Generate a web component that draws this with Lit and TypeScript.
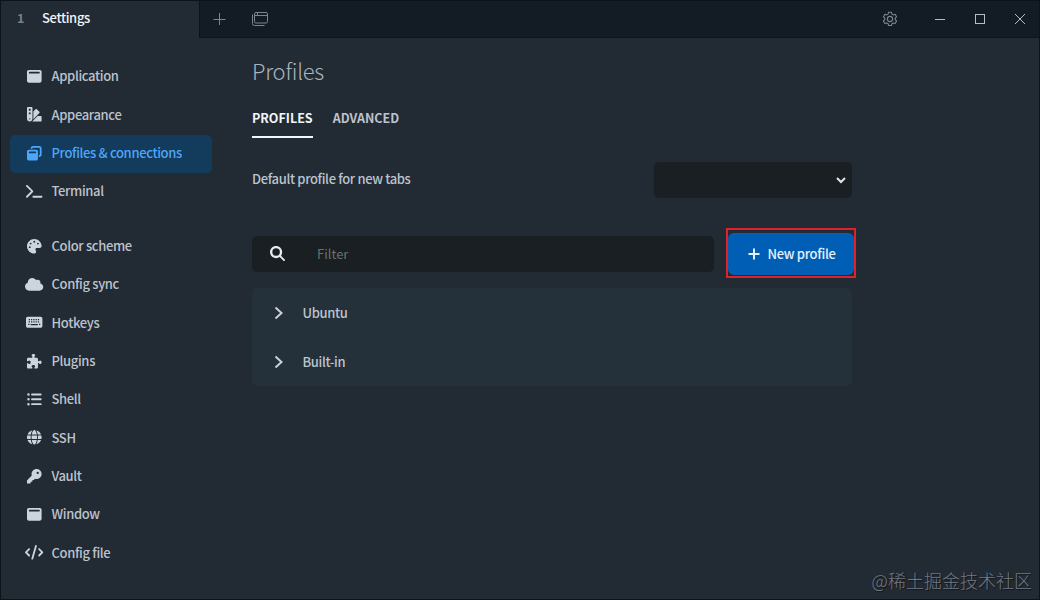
import { LitElement, html, css, svg } from "lit";
import { customElement, property } from "lit/decorators.js";

type Glyph = { w: number; d: string };

const keyHoles = [96, 176, 256, 336, 416]
  .map((x) => `M${x} 136h44v44h-44zM${x} 222h44v44h-44z`)
  .join("");

const ICONS: Record<string, Glyph> = {
  window: { w: 512, d: "M64 32C28.7 32 0 60.7 0 96V416c0 35.3 28.7 64 64 64H448c35.3 0 64-28.7 64-64V96c0-35.3-28.7-64-64-64H64zM96 96H416c17.7 0 32 14.3 32 32s-14.3 32-32 32H96c-17.7 0-32-14.3-32-32s14.3-32 32-32z" },
  restore: { w: 512, d: "M432 64H208c-8.8 0-16 7.2-16 16V96H128V80c0-44.2 35.8-80 80-80H432c44.2 0 80 35.8 80 80V304c0 44.2-35.8 80-80 80H416V320h16c8.8 0 16-7.2 16-16V80c0-8.8-7.2-16-16-16zM0 192c0-35.3 28.7-64 64-64H320c35.3 0 64 28.7 64 64V448c0 35.3-28.7 64-64 64H64c-35.3 0-64-28.7-64-64V192zm64 32c0 17.7 14.3 32 32 32H288c17.7 0 32-14.3 32-32s-14.3-32-32-32H96c-17.7 0-32 14.3-32 32z" },
  swatch: { w: 512, d: "M0 32C0 14.3 14.3 0 32 0H160c17.7 0 32 14.3 32 32V416c0 53-43 96-96 96s-96-43-96-96V32zM223.6 425.9c.3-3.3 .4-6.6 .4-9.9V154l75.4-75.4c12.5-12.5 32.8-12.5 45.3 0l90.5 90.5c12.5 12.5 12.5 32.8 0 45.3L223.6 425.9zM182.8 512l192-192H480c17.7 0 32 14.3 32 32V480c0 17.7-14.3 32-32 32H182.8zM128 64H64v64h64V64zM64 192v64h64V192H64zM96 440a24 24 0 1 0 0-48 24 24 0 1 0 0 48z" },
  terminal: { w: 576, d: "M9.4 86.6C-3.1 74.1-3.1 53.9 9.4 41.4s32.8-12.5 45.3 0l192 192c12.5 12.5 12.5 32.8 0 45.3l-192 192c-12.5 12.5-32.8 12.5-45.3 0s-12.5-32.8 0-45.3L178.7 256 9.4 86.6zM256 416H544c17.7 0 32 14.3 32 32s-14.3 32-32 32H256c-17.7 0-32-14.3-32-32s14.3-32 32-32z" },
  palette: { w: 512, d: "M512 256c0 .9 0 1.8 0 2.7c-.4 36.5-33.6 61.3-70.1 61.3H344c-26.5 0-48 21.5-48 48c0 3.4 .4 6.7 1 9.9c2.1 10.2 6.5 20 10.8 29.9c6.1 13.8 12.1 27.5 12.1 42c0 31.8-21.6 60.7-53.4 62c-3.5 .1-7 .2-10.6 .2C114.6 512 0 397.4 0 256S114.6 0 256 0S512 114.6 512 256zM128 288a32 32 0 1 0 -64 0 32 32 0 1 0 64 0zm0-96a32 32 0 1 0 0-64 32 32 0 1 0 0 64zM288 96a32 32 0 1 0 -64 0 32 32 0 1 0 64 0zm96 96a32 32 0 1 0 0-64 32 32 0 1 0 0 64z" },
  cloud: { w: 640, d: "M0 336c0 79.5 64.5 144 144 144H512c70.7 0 128-57.3 128-128c0-61.9-44-113.6-102.4-125.4c4.1-10.7 6.4-22.4 6.4-34.6c0-53-43-96-96-96c-19.7 0-38.1 6-53.3 16.2C367 64.2 315.3 32 256 32C167.6 32 96 103.6 96 192c0 2.7 .1 5.4 .2 8.1C40.2 219.8 0 273.2 0 336z" },
  keyboard: { w: 576, d: "M64 64C28.700 64 0 92.700 0 128V384c0 35.300 28.700 64 64 64H512c35.300 0 64-28.700 64-64V128c0-35.300-28.700-64-64-64H64zM160 320H416v44H160zM76 308h44v44H76zM456 308h44v44h-44z" + keyHoles },
  puzzle: { w: 512, d: "M192 104.8c0-9.2-5.8-17.3-13.2-22.8C167.2 73.3 160 61.3 160 48c0-26.5 28.7-48 64-48s64 21.5 64 48c0 13.3-7.2 25.3-18.8 34c-7.4 5.5-13.2 13.6-13.2 22.8c0 12.8 10.4 23.2 23.2 23.2H336c26.5 0 48 21.5 48 48v56.8c0 12.8 10.4 23.2 23.2 23.2c9.2 0 17.3-5.8 22.8-13.2c8.7-11.6 20.7-18.8 34-18.8c26.5 0 48 28.7 48 64s-21.5 64-48 64c-13.3 0-25.3-7.2-34-18.8c-5.5-7.4-13.6-13.2-22.8-13.2c-12.8 0-23.2 10.4-23.2 23.2V464c0 26.5-21.5 48-48 48H279.2c-12.8 0-23.2-10.4-23.2-23.2c0-9.2 5.8-17.3 13.2-22.8c11.6-8.7 18.8-20.7 18.8-34c0-26.5-28.7-48-64-48s-64 21.5-64 48c0 13.3 7.2 25.3 18.8 34c7.4 5.5 13.2 13.6 13.2 22.8c0 12.8-10.4 23.2-23.2 23.2H48c-26.5 0-48-21.5-48-48V343.2C0 330.4 10.4 320 23.2 320c9.2 0 17.3 5.8 22.8 13.2C54.7 344.8 66.7 352 80 352c26.5 0 48-28.7 48-64s-21.5-64-48-64c-13.3 0-25.3 7.2-34 18.8C40.5 250.2 32.4 256 23.2 256C10.4 256 0 245.6 0 232.8V176c0-26.5 21.5-48 48-48H168.8c12.8 0 23.2-10.4 23.2-23.2z" },
  list: { w: 512, d: "M52 42a44 44 0 1 1 0 88 44 44 0 1 1 0-88zM52 212a44 44 0 1 1 0 88 44 44 0 1 1 0-88zM52 382a44 44 0 1 1 0 88 44 44 0 1 1 0-88zM176 52H480a34 34 0 0 1 0 68H176a34 34 0 0 1 0-68zM176 222H480a34 34 0 0 1 0 68H176a34 34 0 0 1 0-68zM176 392H480a34 34 0 0 1 0 68H176a34 34 0 0 1 0-68z" },
  globe: { w: 512, d: "M352 256c0 22.2-1.2 43.6-3.3 64H163.3c-2.2-20.4-3.3-41.8-3.3-64s1.2-43.6 3.3-64H348.7c2.2 20.4 3.3 41.8 3.3 64zm28.8-64H503.9c5.3 20.5 8.1 41.9 8.1 64s-2.8 43.5-8.1 64H380.8c2.1-20.6 3.2-42 3.2-64s-1.1-43.4-3.2-64zm112.6-32H376.7c-10-63.9-29.8-117.4-55.3-151.6c78.3 20.7 142 77.5 171.9 151.6zm-149.1 0H167.7c6.1-36.4 15.5-68.6 27-94.7c10.5-23.6 22.2-40.7 33.5-51.5C239.4 3.2 248.7 0 256 0s16.6 3.2 27.8 13.8c11.3 10.8 23 27.9 33.5 51.5c11.6 26 20.9 58.2 27 94.7zm-209 0H18.6C48.6 85.9 112.2 29.1 190.6 8.4C165.1 42.6 145.3 96.1 135.3 160zM8.1 192H131.2c-2.1 20.6-3.2 42-3.2 64s1.1 43.4 3.2 64H8.1C2.8 299.5 0 278.1 0 256s2.8-43.5 8.1-64zM194.7 446.6c-11.6-26-20.9-58.2-27-94.6H344.3c-6.1 36.4-15.5 68.6-27 94.6c-10.5 23.6-22.2 40.7-33.5 51.5C272.6 508.8 263.3 512 256 512s-16.6-3.2-27.8-13.8c-11.3-10.8-23-27.9-33.5-51.5zM135.3 352c10 63.9 29.8 117.4 55.3 151.6C112.2 482.9 48.6 426.1 18.6 352H135.3zm358.1 0c-30 74.1-93.6 130.9-171.9 151.6c25.5-34.2 45.2-87.7 55.3-151.6H493.4z" },
  key: { w: 512, d: "M336 352c97.2 0 176-78.8 176-176S433.2 0 336 0S160 78.800 160 176c0 18.700 2.900 36.800 8.300 53.700L7 391c-4.500 4.500-7 10.600-7 17v80c0 13.300 10.700 24 24 24h80c13.300 0 24-10.700 24-24V448h40c13.300 0 24-10.700 24-24V384h40c6.400 0 12.500-2.500 17-7l33.300-33.300c16.900 5.400 35 8.300 53.700 8.300zM376 96a40 40 0 1 1 0 80 40 40 0 1 1 0-80z" },
  code: { w: 640, d: "M392.8 1.2c-17-4.9-34.7 5-39.6 22l-128 448c-4.9 17 5 34.7 22 39.6s34.7-5 39.6-22l128-448c4.9-17-5-34.7-22-39.6zm80.6 120.1c-12.5 12.5-12.5 32.8 0 45.3L562.7 256l-89.4 89.4c-12.5 12.5-12.5 32.8 0 45.3s32.8 12.5 45.3 0l112-112c12.5-12.5 12.5-32.8 0-45.3l-112-112c-12.5-12.5-32.8-12.5-45.3 0zm-306.7 0c-12.5-12.5-32.8-12.5-45.3 0l-112 112c-12.5 12.5-12.5 32.8 0 45.3l112 112c12.5 12.5 32.8 12.5 45.3 0s12.5-32.8 0-45.3L77.3 256l89.4-89.4c12.5-12.5 12.5-32.8 0-45.3z" },
  search: { w: 512, d: "M416 208c0 45.9-14.9 88.3-40 122.700L502.600 457.400c12.500 12.500 12.500 32.800 0 45.300s-32.800 12.500-45.300 0L330.700 376c-34.400 25.200-76.800 40-122.700 40C93.100 416 0 322.900 0 208S93.100 0 208 0S416 93.100 416 208zM208 336a128 128 0 1 0 0-256 128 128 0 1 0 0 256z" },
};

const NAV: { icon: string; label: string }[][] = [
  [
    { icon: "window", label: "Application" },
    { icon: "swatch", label: "Appearance" },
    { icon: "restore", label: "Profiles & connections" },
    { icon: "terminal", label: "Terminal" },
  ],
  [
    { icon: "palette", label: "Color scheme" },
    { icon: "cloud", label: "Config sync" },
    { icon: "keyboard", label: "Hotkeys" },
    { icon: "puzzle", label: "Plugins" },
    { icon: "list", label: "Shell" },
    { icon: "globe", label: "SSH" },
    { icon: "key", label: "Vault" },
    { icon: "window", label: "Window" },
    { icon: "code", label: "Config file" },
  ],
];

@customElement("solid-icon")
class SolidIcon extends LitElement {
  @property() name = "window";
  static styles = css`
    :host { display: flex; justify-content: center; align-items: center; height: 1em; }
    svg { display: block; height: 1em; flex: none; overflow: visible; }
    path { fill: currentColor; fill-rule: evenodd; }
  `;
  render() {
    const g = ICONS[this.name];
    return html`<svg viewBox="0 0 ${g.w} 512">${svg`<path d=${g.d}></path>`}</svg>`;
  }
}

@customElement("app-root")
class AppRoot extends LitElement {
  @property() active = "Profiles & connections";

  static styles = css`
    :host {
      display: block;
      width: 1040px;
      height: 600px;
      color: #bcc3cc;
      font: 500 13px/20px "Noto Sans CJK SC", sans-serif;
      letter-spacing: -0.350px;
    }
    * { box-sizing: border-box; }
    .window {
      position: relative;
      display: flex;
      flex-direction: column;
      width: 100%;
      height: 100%;
      border: 1px solid #0b131b;
      background: #222a34;
      overflow: hidden;
      white-space: nowrap;
    }
    .bar { display: flex; height: 37px; flex: none; margin-right: -1px; }
    .tab { width: 198px; display: flex; align-items: center; padding: 0 0 3px 16px; gap: 17px; }
    .num { font: 700 12.500px/20px "Noto Sans CJK SC", sans-serif; color: #77818a; width: 8px; padding-bottom: 1px; }
    .tab-title { color: #f0f4f8; font-weight: 500; }
    .strip {
      flex: 1;
      display: flex;
      align-items: center;
      background: #131c25;
      border-left: 1px solid #0b131b;
      border-bottom: 1px solid #0d151d;
    }
    .strip svg { display: block; fill: none; stroke: #7b858e; }
    .cell { width: 40px; display: flex; justify-content: center; }
    .spacer { flex: 1; }
    .gear-cell { margin-right: 10px; }
    .strip .win { stroke: #b4bdc5; }
    .body { display: flex; flex: 1; min-height: 0; }
    nav { width: 211px; padding: 20px 0 0 9px; flex: none; display: flex; flex-direction: column; gap: 16.600px; }
    .item {
      height: 38.300px;
      display: grid;
      grid-template-columns: 18px 1fr;
      align-items: center;
      column-gap: 8px;
      padding: 0 0 1.600px 15.500px;
      border-radius: 5px;
    }
    .item solid-icon { font-size: 14.600px; color: #ccd4e0; }
    .item.on { background: #133b5c; color: #4ea6f8; }
    .item.on solid-icon { color: #4ea6f8; }
    main { width: 600px; margin-left: 40px; padding-top: 15px; }
    h1 { margin: 0; font-size: 22px; line-height: 34px; font-weight: 300; color: #a9b4bd; letter-spacing: -0.250px; }
    .tabs { display: flex; gap: 20px; margin-top: 12px; letter-spacing: 0; }
    .tabs div { height: 39px; padding-top: 9px; font-weight: 700; font-size: 12.500px; border-bottom: 2px solid transparent; }
    .tabs .sel { color: #f3f6f9; border-color: #f3f6f9; }
    .row { display: flex; justify-content: space-between; align-items: center; margin-top: 24px; height: 36px; }
    .row span { padding-bottom: 2px; }
    .select {
      width: 198px;
      height: 36px;
      background: #191f23;
      border-radius: 5px;
      display: flex;
      justify-content: flex-end;
      align-items: center;
      padding-right: 6px;
    }
    .select svg, .chev { display: block; fill: none; stroke: #e2e6e8; }
    .chev { stroke: #ccd2d8; }
    .actions { display: flex; gap: 12px; margin-top: 30px; align-items: center; height: 50px; margin-right: -4px; }
    .filter {
      width: 462px;
      height: 36px;
      margin-top: 1px;
      background: #191f23;
      border-radius: 5px;
      display: flex;
      align-items: center;
      gap: 32px;
      padding-left: 18px;
      color: #68716f;
      font-weight: 400;
      letter-spacing: 0;
    }
    .filter solid-icon { color: #e8ecee; font-size: 15px; width: 15px; }
    .new-frame { width: 130px; height: 50px; border: 2px solid #e0202b; padding: 3px 0 1px; }
    .new {
      height: 42px;
      background: #005fb4;
      border-top: 1px solid #275c8b;
      border-radius: 6px;
      color: #e4f0fb;
      letter-spacing: -0.300px;
      display: flex;
      align-items: center;
      justify-content: center;
      gap: 7px;
      padding: 0 0 2px 2px;
    }
    .list { margin-top: 10px; background: #24303a; border-radius: 5px; height: 98px; }
    .entry { height: 49px; display: flex; align-items: center; gap: 18.500px; padding: 1px 0 0 22px; }
    .mark {
      position: absolute;
      right: 7px;
      bottom: 6px;
      font: 300 18px/26px "Noto Sans CJK SC", sans-serif;
      letter-spacing: 0;
      color: #727981;
      text-shadow: 1px 1px 1px #10161c;
    }
  `;

  private item(i: { icon: string; label: string }) {
    return html`<div class="item ${i.label === this.active ? "on" : ""}">
      <solid-icon name=${i.icon}></solid-icon><span>${i.label}</span>
    </div>`;
  }

  private entry(label: string) {
    return html`<div class="entry">
      <svg class="chev" width="10" height="14" viewBox="0 0 10 14" stroke-width="2">
        <path d="M1.500 1.500 7.500 7 1.500 12.500"></path>
      </svg>
      <span>${label}</span>
    </div>`;
  }

  render() {
    return html`<div class="window">
      <div class="bar">
        <div class="tab"><span class="num">1</span><span class="tab-title">Settings</span></div>
        <div class="strip">
          <div class="cell">
            <svg width="14" height="14" viewBox="0 0 14 14"><path d="M6.500 1v12M.5 7.500h12"></path></svg>
          </div>
          <div class="cell">
            <svg width="18" height="16" viewBox="0 0 18 16">
              <rect x="3.500" y="1.500" width="13" height="10.500" rx="1.500"></rect>
              <path d="M3.500 4.500h13M6.500 1.500v3M1.500 3.500v9q0 2 2 2h10"></path>
            </svg>
          </div>
          <div class="spacer"></div>
          <div class="cell gear-cell">
            <svg width="16" height="16" viewBox="0 0 16 16" stroke-width="1.100">
              <circle cx="8" cy="8" r="2.600"></circle>
              <path d="M6.600.6h2.800l.5 1.900 1.300.8 1.900-.6 1.500 2.400-1.400 1.400v1.500l1.400 1.400-1.500 2.500-1.900-.6-1.300.8-.5 1.800H6.600l-.5-1.800-1.300-.8-1.900.6L1.400 9.400 2.800 8V6.500L1.400 5.100l1.500-2.400 1.900.6 1.300-.8z" transform="translate(0 .6)" stroke-linejoin="round"></path>
            </svg>
          </div>
          <div class="cell">
            <svg class="win" width="12" height="12"><path d="M1 6.500h10"></path></svg>
          </div>
          <div class="cell">
            <svg class="win" width="12" height="12"><rect x="1.500" y="1.500" width="9" height="9"></rect></svg>
          </div>
          <div class="cell">
            <svg class="win" width="12" height="12"><path d="M1 1l10 10M11 1 1 11"></path></svg>
          </div>
        </div>
      </div>
      <div class="body">
        <nav>${NAV.map((g) => html`<div>${g.map((i) => this.item(i))}</div>`)}</nav>
        <main>
          <h1>Profiles</h1>
          <div class="tabs"><div class="sel">PROFILES</div><div>ADVANCED</div></div>
          <div class="row">
            <span>Default profile for new tabs</span>
            <div class="select">
              <svg width="10" height="8" viewBox="0 0 10 8" stroke-width="2"><path d="M1 2l4 4 4-4"></path></svg>
            </div>
          </div>
          <div class="actions">
            <div class="filter"><solid-icon name="search"></solid-icon><span>Filter</span></div>
            <div class="new-frame">
              <div class="new">
                <svg width="12" height="12" viewBox="0 0 12 12" fill="none" stroke="currentColor" stroke-width="2">
                  <path d="M6 .5v11M.5 6h11"></path>
                </svg>
                <span>New profile</span>
              </div>
            </div>
          </div>
          <div class="list">${["Ubuntu", "Built-in"].map((l) => this.entry(l))}</div>
        </main>
      </div>
      <div class="mark">@稀土掘金技术社区</div>
    </div>`;
  }
}
